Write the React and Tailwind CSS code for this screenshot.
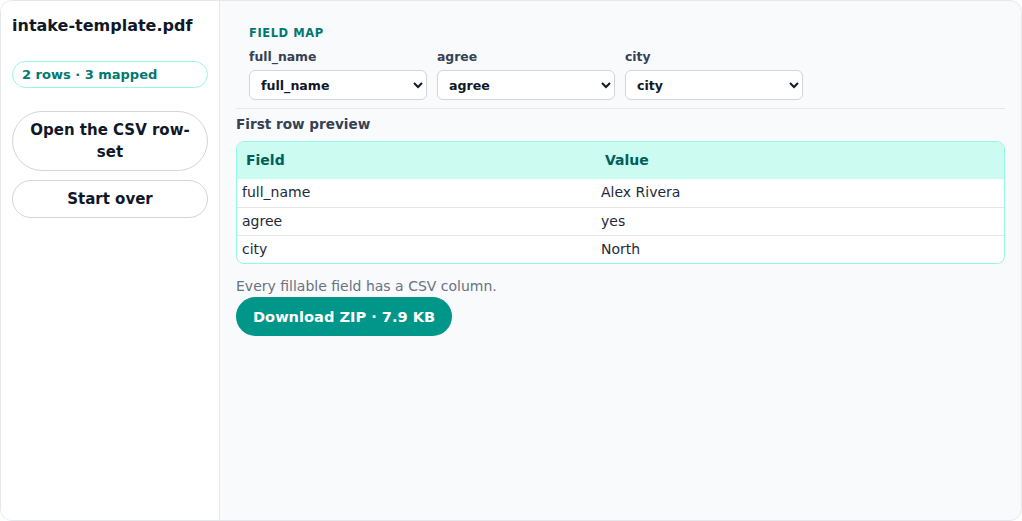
import React from 'react';

const mappings = [
  { field: 'full_name', column: 'full_name' },
  { field: 'agree', column: 'agree' },
  { field: 'city', column: 'city' },
];

const preview = [
  { field: 'full_name', value: 'Alex Rivera' },
  { field: 'agree', value: 'yes' },
  { field: 'city', value: 'North' },
];

const App = () => {
  return (
    <div
      className="h-screen flex border border-gray-200 rounded-xl overflow-hidden bg-slate-50 text-gray-900"
      style={{ fontFamily: '"DejaVu Sans", sans-serif' }}
    >
      <aside className="w-[219px] shrink-0 bg-white border-r border-gray-200 px-[11px] pt-[14px] flex flex-col">
        <h1 className="text-[16px] font-bold leading-[22px] text-gray-900">intake-template.pdf</h1>
        <div className="mt-[24px] h-[27px] border border-teal-200 rounded-full px-[9px] flex items-center text-[13px] font-bold text-teal-700">
          2 rows · 3 mapped
        </div>
        <button className="mt-[23px] min-h-[60px] border border-gray-300 rounded-[30px] bg-white px-4 text-[15px] font-bold leading-[22px] text-gray-900">
          Open the CSV row-set
        </button>
        <button className="mt-[9px] h-[38px] border border-gray-300 rounded-full bg-white text-[15px] font-bold text-gray-900">
          Start over
        </button>
      </aside>

      <main className="flex-1 px-4 pt-[11px]">
        <section className="px-[13px] pt-[13px] pb-[8px] border-b border-gray-200">
          <h2 className="text-[11.5px] font-bold uppercase tracking-[0.05em] text-teal-700 leading-[16px]">Field map</h2>
          <div className="mt-[7px] flex gap-[10px]">
            {mappings.map((m) => (
              <label key={m.field} className="flex flex-col w-[178px]">
                <span className="text-[12.4px] font-bold text-gray-700 leading-[18px]">{m.field}</span>
                <select
                  defaultValue={m.column}
                  className="mt-[4px] h-[30px] border border-gray-300 rounded-[6px] bg-white pl-[7px] pr-1 text-[12.6px] font-bold text-gray-900"
                >
                  <option value={m.column}>{m.column}</option>
                </select>
              </label>
            ))}
          </div>
        </section>

        <h3 className="mt-[5px] text-[13.6px] font-bold text-gray-700 leading-[20px]">First row preview</h3>
        <div className="mt-[7px] border border-teal-200 rounded-lg overflow-hidden bg-white">
          <table className="w-full text-[14px] border-collapse">
            <thead>
              <tr className="bg-teal-100 text-teal-800">
                <th className="w-[359px] h-[37px] px-[9px] text-left font-bold">Field</th>
                <th className="h-[37px] px-[9px] text-left font-bold">Value</th>
              </tr>
            </thead>
            <tbody>
              {preview.map((row, i) => (
                <tr key={row.field} className={i > 0 ? 'border-t border-gray-200' : ''}>
                  <td className="h-[28px] px-[5px] text-gray-800">{row.field}</td>
                  <td className="h-[28px] px-[5px] text-gray-800">{row.value}</td>
                </tr>
              ))}
            </tbody>
          </table>
        </div>

        <p className="mt-[13px] text-[14px] text-gray-500 leading-[18px]">Every fillable field has a CSV column.</p>
        <button className="mt-[2px] h-[39px] px-[17px] rounded-full bg-teal-600 text-white text-[14.6px] font-bold">
          Download ZIP · 7.9 KB
        </button>
      </main>
    </div>
  );
};

export default App;
